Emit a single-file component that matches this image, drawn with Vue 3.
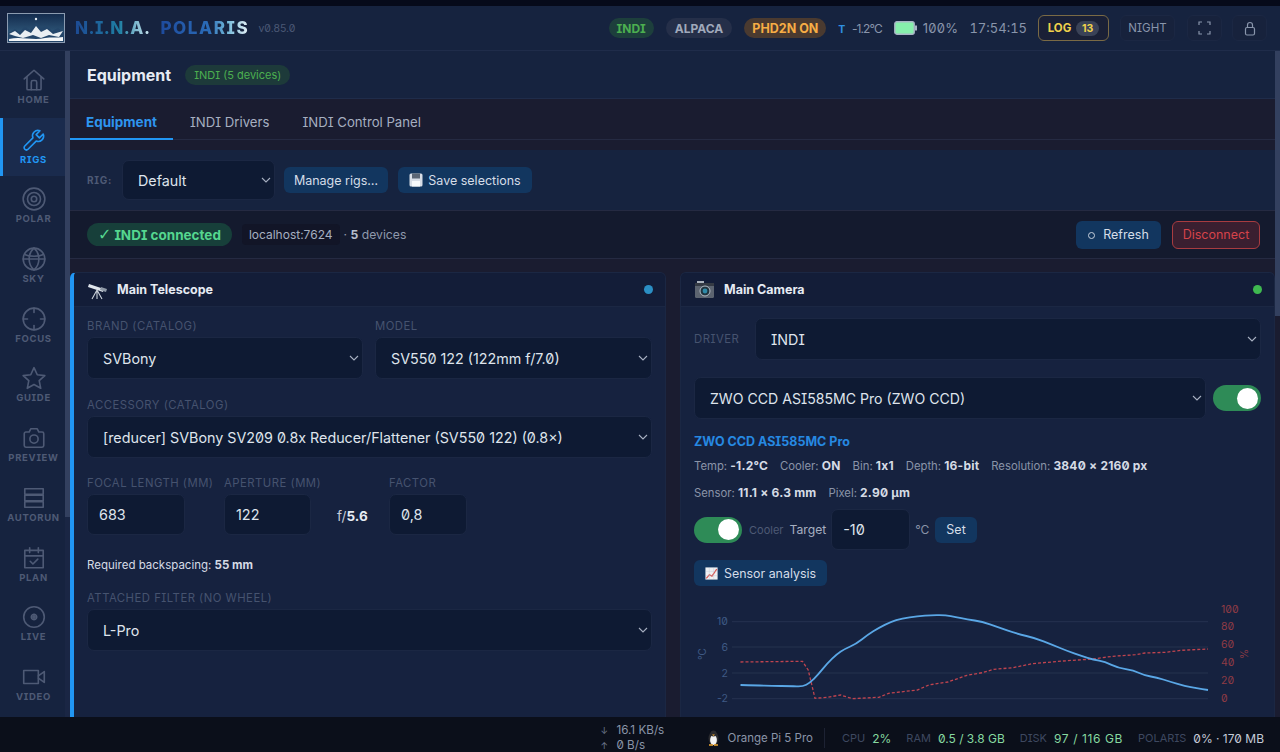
<template>
  <div class="app">
    <div class="top-strip"></div>

    <!-- Header -->
    <header class="header">
      <svg class="logo" viewBox="0 0 58 30" width="58" height="30">
        <defs>
          <linearGradient id="sky" x1="0" y1="0" x2="0" y2="1">
            <stop offset="0" stop-color="#132b4d" />
            <stop offset="1" stop-color="#3b6a8c" />
          </linearGradient>
        </defs>
        <rect x="0.5" y="0.5" width="57" height="29" fill="url(#sky)" stroke="#8b9bb0" />
        <circle cx="29" cy="6" r="1.2" fill="#e8eef5" />
        <path d="M1 29 V20 L8 16 L12 19 L18 14 L23 17 L29 10 L34 15 L40 13 L45 18 L51 15 L57 19 V29 Z" fill="#24466a" />
        <path d="M2 21 L8 18 L13 22 L18 17 L24 20 L29 13 L34 19 L40 16 L46 21 L56 18 L52 24 L42 22 L34 25 L26 22 L16 25 L8 23 Z" fill="#e9eef2" />
        <path d="M2 26 C14 23 26 28 38 25 C44 24 50 25 56 24 V28 H2 Z" fill="#f4f6f8" />
      </svg>
      <div class="brand">
        <span class="brand-a">N.I.N.A.</span>
        <span class="brand-b">POLARIS</span>
      </div>
      <span class="version">v0.85.0</span>

      <div class="status">
        <span class="pill pill-green">INDI</span>
        <span class="pill pill-grey">ALPACA</span>
        <span class="pill pill-orange">PHD2N ON</span>
        <span class="temp"><b>T</b> -1.2°C</span>
        <svg class="battery" width="23" height="14" viewBox="0 0 23 14">
          <rect x="0.8" y="0.8" width="19.4" height="12.4" rx="2" fill="#86efac" stroke="#a9b4c6" stroke-width="1.4" />
          <rect x="21" y="4.5" width="2" height="5" fill="#a9b4c6" />
        </svg>
        <span class="stat">100%</span>
        <span class="stat clock">17:54:15</span>
        <button class="log-btn">LOG <span class="log-count">13</span></button>
        <button class="head-btn night">NIGHT</button>
        <button class="head-btn icon-btn">
          <svg width="13" height="14" viewBox="0 0 13 14" fill="none" stroke="#8995ab" stroke-width="1.2">
            <path d="M1 4 V1 H4 M9 1 H12 V4 M12 10 V13 H9 M4 13 H1 V10" />
          </svg>
        </button>
        <button class="head-btn icon-btn">
          <svg width="14" height="15" viewBox="0 0 14 15" fill="none" stroke="#8995ab" stroke-width="1.2">
            <rect x="2.5" y="6.5" width="9" height="7.5" rx="1.5" />
            <path d="M4.5 6.5 V4 a2.5 2.5 0 0 1 5 0 V6.5" />
          </svg>
        </button>
      </div>
    </header>

    <div class="body">
      <!-- Sidebar -->
      <nav class="sidebar">
        <a v-for="item in navItems" :key="item.label" class="nav-item" :class="{ active: item.active }">
          <svg width="26" height="26" viewBox="0 0 24 24" fill="none" stroke="currentColor" stroke-width="1.5" stroke-linecap="round" stroke-linejoin="round">
            <path v-for="d in item.paths" :key="d" :d="d" />
            <circle v-for="c in item.circles" :key="c[0] + '-' + c[2]" :cx="c[0]" :cy="c[1]" :r="c[2]" />
          </svg>
          <span>{{ item.label }}</span>
        </a>
      </nav>
      <div class="side-scroll"></div>

      <!-- Main -->
      <main class="main">
        <div class="page-head">
          <h1>Equipment</h1>
          <span class="mode-tag">INDI (5 devices)</span>
        </div>

        <div class="tabs">
          <a class="tab active">Equipment</a>
          <a class="tab">INDI Drivers</a>
          <a class="tab">INDI Control Panel</a>
        </div>

        <div class="rig-row">
          <label class="rig-label">RIG:</label>
          <div class="field rig-select">
            <select><option>Default</option></select>
            <svg class="chev" width="10" height="6" viewBox="0 0 10 6"><path d="M1 1 L5 5 L9 1" /></svg>
          </div>
          <button class="btn manage">Manage rigs…</button>
          <button class="btn save">
            <svg width="14" height="14" viewBox="0 0 14 14">
              <rect x="0.5" y="0.5" width="13" height="13" rx="1.5" fill="#d7dde6" />
              <rect x="3" y="0.5" width="8" height="5" fill="#5b6675" />
              <rect x="3" y="8" width="8" height="5.5" fill="#f6f8fa" />
            </svg>
            Save selections
          </button>
        </div>

        <div class="conn-bar">
          <span class="conn-pill"><span class="check">✓</span> INDI connected</span>
          <code class="host">localhost:7624</code>
          <span class="devices">· <b>5</b> devices</span>
          <div class="conn-actions">
            <button class="btn refresh"><span class="ring"></span> Refresh</button>
            <button class="btn disconnect">Disconnect</button>
          </div>
        </div>

        <div class="panels">
          <!-- Telescope -->
          <section class="panel panel-left">
            <div class="panel-head">
              <svg width="21" height="21" viewBox="0 0 21 21">
                <path d="M2 5 L17 10 L16 13 L1 8 Z" fill="#dfe5ec" />
                <path d="M14 8 L20 10 L19 13 L13 11 Z" fill="#8f9aa8" />
                <path d="M10 11 L5 20 M10 11 L10 20 M10 11 L15 20" stroke="#c9d0d9" stroke-width="1.1" fill="none" />
              </svg>
              <h2>Main Telescope</h2>
              <span class="dot dot-blue"></span>
            </div>
            <div class="panel-body">
              <div class="row two">
                <div>
                  <label>Brand (catalog)</label>
                  <div class="field">
                    <select><option>SVBony</option></select>
                    <svg class="chev" width="10" height="6" viewBox="0 0 10 6"><path d="M1 1 L5 5 L9 1" /></svg>
                  </div>
                </div>
                <div>
                  <label>Model</label>
                  <div class="field">
                    <select><option>SV550 122 (122mm f/7.0)</option></select>
                    <svg class="chev" width="10" height="6" viewBox="0 0 10 6"><path d="M1 1 L5 5 L9 1" /></svg>
                  </div>
                </div>
              </div>
              <div class="row">
                <label>Accessory (catalog)</label>
                <div class="field">
                  <select><option>[reducer] SVBony SV209 0.8x Reducer/Flattener (SV550 122) (0.8×)</option></select>
                  <svg class="chev" width="10" height="6" viewBox="0 0 10 6"><path d="M1 1 L5 5 L9 1" /></svg>
                </div>
              </div>
              <div class="row optics">
                <div class="w-focal">
                  <label>Focal length (mm)</label>
                  <input class="num" value="683" />
                </div>
                <div class="w-aperture">
                  <label>Aperture (mm)</label>
                  <input class="num" value="122" />
                </div>
                <span class="ratio">f/<b>5.6</b></span>
                <div class="w-factor">
                  <label>Factor</label>
                  <input class="num" value="0,8" />
                </div>
              </div>
              <p class="backspacing">Required backspacing: <b>55 mm</b></p>
              <div class="row">
                <label>Attached filter (no wheel)</label>
                <div class="field">
                  <select><option>L-Pro</option></select>
                  <svg class="chev" width="10" height="6" viewBox="0 0 10 6"><path d="M1 1 L5 5 L9 1" /></svg>
                </div>
              </div>
            </div>
          </section>

          <!-- Camera -->
          <section class="panel panel-right">
            <div class="panel-head">
              <svg width="21" height="19" viewBox="0 0 21 19">
                <rect x="3" y="1" width="7" height="3" fill="#aab2bc" />
                <rect x="1" y="3" width="19" height="15" rx="1.5" fill="#5c6470" />
                <rect x="1" y="3" width="19" height="3" fill="#343a44" />
                <circle cx="11" cy="11" r="5" fill="#20343f" stroke="#b4bcc6" />
                <circle cx="11" cy="11" r="2.4" fill="#2f8aa8" />
              </svg>
              <h2>Main Camera</h2>
              <span class="dot dot-green"></span>
            </div>
            <div class="panel-body cam-body">
              <div class="driver-row">
                <label>Driver</label>
                <div class="field">
                  <select><option>INDI</option></select>
                  <svg class="chev" width="10" height="6" viewBox="0 0 10 6"><path d="M1 1 L5 5 L9 1" /></svg>
                </div>
              </div>
              <div class="device-row">
                <div class="field">
                  <select><option>ZWO CCD ASI585MC Pro (ZWO CCD)</option></select>
                  <svg class="chev" width="10" height="6" viewBox="0 0 10 6"><path d="M1 1 L5 5 L9 1" /></svg>
                </div>
                <span class="toggle"><i></i></span>
              </div>
              <div class="cam-name">ZWO CCD ASI585MC Pro</div>
              <div class="cam-stats">
                <span>Temp: <b>-1.2°C</b></span>
                <span>Cooler: <b>ON</b></span>
                <span>Bin: <b>1x1</b></span>
                <span>Depth: <b>16-bit</b></span>
                <span>Resolution: <b>3840 × 2160 px</b></span>
              </div>
              <div class="cam-stats second">
                <span>Sensor: <b>11.1 × 6.3 mm</b></span>
                <span>Pixel: <b>2.90 µm</b></span>
              </div>
              <div class="cooler-row">
                <span class="toggle"><i></i></span>
                <span class="cooler-label">Cooler</span>
                <span class="target-label">Target</span>
                <input class="num target" value="-10" />
                <span class="unit">°C</span>
                <button class="btn set">Set</button>
              </div>
              <button class="btn sensor">
                <svg width="15" height="15" viewBox="0 0 15 15">
                  <rect x="0.5" y="0.5" width="14" height="14" fill="#eef1f4" />
                  <path d="M1.5 13 L5 9 L8 10.5 L13.5 2.5" fill="none" stroke="#d9534f" stroke-width="1.4" />
                  <path d="M5 1 V14 M10 1 V14 M1 5 H14 M1 10 H14" stroke="#b9c2cc" stroke-width="0.4" />
                </svg>
                Sensor analysis
              </button>
              <svg class="chart" width="570" height="117" viewBox="0 0 570 117">
                <line v-for="y in grid" :key="y" x1="42" x2="518" :y1="y" :y2="y" class="grid-line" />
                <text v-for="t in leftTicks" :key="t.v" x="38" :y="t.y + 3.5" class="tick-left">{{ t.v }}</text>
                <text v-for="t in rightTicks" :key="t.v" x="531" :y="t.y + 3.5" class="tick-right">{{ t.v }}</text>
                <text x="0" y="0" class="axis-left" transform="translate(16 54) rotate(-90)">°C</text>
                <text x="0" y="0" class="axis-right" transform="translate(558 54) rotate(-90)">%</text>
                <polyline :points="humidityLine" class="line-hum" />
                <path :d="tempLine" class="line-temp" />
              </svg>
            </div>
          </section>
        </div>
        <div class="main-scroll"></div>
      </main>
    </div>

    <!-- Footer -->
    <footer class="footer">
      <div class="net">
        <span><i>↓</i> 16.1 KB/s</span>
        <span><i>↑</i> 0 B/s</span>
      </div>
      <svg class="penguin" width="13" height="16" viewBox="0 0 13 16">
        <ellipse cx="6.5" cy="8.5" rx="5" ry="7" fill="#2a2a2e" />
        <ellipse cx="6.5" cy="10" rx="3.4" ry="5" fill="#f2f2f2" />
        <circle cx="6.5" cy="3.5" r="3" fill="#2a2a2e" />
        <path d="M5 4.5 H8 L6.5 6 Z" fill="#f0a830" />
        <path d="M2 15 H6 M7 15 H11" stroke="#f0a830" stroke-width="1.4" />
      </svg>
      <span class="host-name">Orange Pi 5 Pro</span>
      <span class="foot-div"></span>
      <span class="foot-key">CPU</span><span class="foot-val">2%</span>
      <span class="foot-key">RAM</span><span class="foot-val">0.5 / 3.8 GB</span>
      <span class="foot-key">DISK</span><span class="foot-val disk">97 / 116 GB</span>
      <span class="foot-key">POLARIS</span><span class="foot-val light">0% · 170 MB</span>
    </footer>
  </div>
</template>

<script setup>
const navItems = [
  { label: 'Home', paths: ['M3 11 L12 3 L21 11', 'M5.5 9 V20 a1 1 0 0 0 1 1 H17.5 a1 1 0 0 0 1 -1 V9', 'M9.5 21 V14 a1.5 1.5 0 0 1 1.5 -1.5 H13 a1.5 1.5 0 0 1 1.5 1.5 V21'] },
  { label: 'Rigs', active: true, paths: ['M20.5 6.5 L17 10 L14 7 L17.5 3.5 A5 5 0 0 0 11 10 L3.5 17.5 a2.1 2.1 0 0 0 3 3 L14 13 A5 5 0 0 0 20.5 6.5 Z'] },
  { label: 'Polar', paths: [], circles: [[12, 12, 10], [12, 12, 6], [12, 12, 2.5]] },
  { label: 'Sky', paths: ['M2 12 H22', 'M12 2 C6 7 6 17 12 22', 'M12 2 C18 7 18 17 12 22', 'M4 8 C8 10 16 10 20 8'], circles: [[12, 12, 10]] },
  { label: 'Focus', paths: ['M12 2 V6', 'M12 18 V22', 'M2 12 H6', 'M18 12 H22'], circles: [[12, 12, 10]] },
  { label: 'Guide', paths: ['M12 2.5 L15 9 L22 9.8 L16.8 14.5 L18.2 21.5 L12 18 L5.8 21.5 L7.2 14.5 L2 9.8 L9 9 Z'] },
  { label: 'Preview', paths: ['M3 8 a1.5 1.5 0 0 1 1.5 -1.5 H7.5 L9 3.5 H15 L16.5 6.5 H19.5 A1.5 1.5 0 0 1 21 8 V19 a1.5 1.5 0 0 1 -1.5 1.5 H4.5 A1.5 1.5 0 0 1 3 19 Z'], circles: [[12, 13, 3.8]] },
  { label: 'Autorun', paths: ['M3.5 3.5 H20.5 V8.5 H3.5 Z', 'M3.5 9.5 H20.5 V14.5 H3.5 Z', 'M3.5 15.5 H20.5 V20.5 H3.5 Z'] },
  { label: 'Plan', paths: ['M3.5 5 H20.5 V21 H3.5 Z', 'M3.5 10 H20.5', 'M8 2.5 V7', 'M16 2.5 V7', 'M8.5 15 L11 17.5 L15.5 13'] },
  { label: 'Live', paths: ['M12 11 a1 1 0 1 0 0.01 0', 'M12 9.5 a2.5 2.5 0 1 0 0.01 0'], circles: [[12, 12, 9.5]] },
  { label: 'Video', paths: ['M2.5 6 H16 V18 H2.5 Z', 'M16 11 L21.5 7 V17 L16 13'] }
]

const grid = [21.7, 47, 73, 98.7]
const leftTicks = [
  { v: 10, y: 21.7 },
  { v: 6, y: 47 },
  { v: 2, y: 73 },
  { v: -2, y: 98.7 }
]
const rightTicks = [
  { v: 100, y: 9 },
  { v: 80, y: 26.7 },
  { v: 60, y: 44.7 },
  { v: 40, y: 62.3 },
  { v: 20, y: 80.3 },
  { v: 0, y: 98.3 }
]

const tempSamples = [
  [50.5, 85], [66.5, 85.3], [81.8, 86], [101, 86], [112.5, 86.7], [120, 82.7], [127.8, 75],
  [137.3, 63.3], [147, 54], [154.6, 49], [166, 44], [177.5, 35], [189, 27.7], [200.5, 22],
  [212, 18.3], [227.3, 16.3], [242.6, 15], [256, 15.3], [265.5, 17], [277, 19.3], [292.3, 21.7],
  [307.6, 27], [326.8, 33.7], [346, 38.3], [361.2, 44.3], [376.5, 50.7], [391.8, 56], [403.3, 59.7],
  [414.8, 61.7], [428.2, 68], [443.5, 70.3], [455, 75.7], [466.5, 77.3], [479.9, 81.7], [495.2, 86],
  [506.6, 88.3], [518, 90]
]
const humiditySamples = [
  [50.5, 62], [112.5, 61.3], [118.2, 70], [125, 98.3], [137.3, 97.3], [150.7, 95], [162.2, 98.7],
  [189, 97.3], [198.6, 93.3], [227.3, 90], [238.7, 85], [257.9, 82], [277, 75.3], [292.3, 72.7],
  [303.8, 69.3], [322.9, 67.7], [342, 63.7], [372.7, 61], [403.3, 59], [422.4, 56.3], [445.4, 54.7],
  [455, 53], [476, 52.3], [491.3, 50.3], [518, 49]
]

// rounded line through the samples, curving at each point towards the next midpoint
const smooth = (pts) => {
  let d = `M${pts[0][0]} ${pts[0][1]}`
  for (let i = 1; i < pts.length - 1; i++) {
    const mx = (pts[i][0] + pts[i + 1][0]) / 2
    const my = (pts[i][1] + pts[i + 1][1]) / 2
    d += ` Q${pts[i][0]} ${pts[i][1]} ${mx} ${my}`
  }
  const last = pts[pts.length - 1]
  return `${d} L${last[0]} ${last[1]}`
}

const tempLine = smooth(tempSamples)
const humidityLine = humiditySamples.map(p => p.join(',')).join(' ')
</script>

<style>
html, body {
  margin: 0;
  background: #0b0f1a;
}
</style>

<style scoped>
* {
  box-sizing: border-box;
}

.app {
  width: 1280px;
  height: 752px;
  display: flex;
  flex-direction: column;
  overflow: hidden;
  background: #1a1c30;
  color: #dde3ee;
  font-family: Inter, "Noto Sans", sans-serif;
  font-feature-settings: "zero", "cv08";
  font-size: 13px;
}

button, input, select {
  font-family: inherit;
  font-feature-settings: inherit;
}

.top-strip {
  height: 6px;
  background: #060a1a;
}

/* Header */
.header {
  height: 45px;
  display: flex;
  align-items: center;
  padding: 0 13px 0 7px;
  background: #16233f;
  border-bottom: 1px solid #1f2c4a;
}

.logo {
  flex: none;
}

.brand {
  margin-left: 10px;
  display: flex;
  gap: 10px;
  font-size: 17px;
  font-weight: 800;
  letter-spacing: 1.6px;
}

.brand-a {
  letter-spacing: 0.5px;
  background: linear-gradient(90deg, #1d4a94, #1f7fa3 60%, #cfe8f2);
  -webkit-background-clip: text;
  background-clip: text;
  color: transparent;
}

.brand-b {
  background: linear-gradient(90deg, #1d4a9c, #2b6cb8 55%, #6fb6d8 75%, #e8f2f6);
  -webkit-background-clip: text;
  background-clip: text;
  color: transparent;
}

.version {
  margin-left: 9px;
  font-size: 10.5px;
  color: #4b5875;
}

.status {
  margin-left: auto;
  display: flex;
  align-items: center;
}

.pill {
  height: 20px;
  display: flex;
  align-items: center;
  padding: 0 9px;
  border-radius: 10px;
  font-size: 12px;
  font-weight: 700;
  margin-right: 12px;
}

.pill-green {
  background: #1d3f3c;
  color: #4caf50;
  padding: 0 8px;
}

.pill-grey {
  background: #252f49;
  color: #a0a9bb;
}

.pill-orange {
  background: #4a3a30;
  color: #f6ad45;
  padding: 0 8px;
  font-size: 12.5px;
}

.temp {
  font-size: 12px;
  color: #8995ab;
  margin-right: 12px;
  letter-spacing: -0.9px;
}

.temp b {
  color: #2f8fe0;
  font-size: 10.5px;
  margin-right: 5px;
}

.battery {
  margin-right: 6px;
}

.stat {
  font-size: 13px;
  color: #8995ab;
  margin-right: 11px;
  letter-spacing: 0.3px;
}

.clock {
  margin-right: 11px;
  letter-spacing: 0;
  font-feature-settings: "zero", "cv08", "tnum";
}

.log-btn {
  width: 71px;
  height: 26px;
  background: #1a2036;
  border: 1px solid #7a6a45;
  border-radius: 6px;
  color: #f0d24c;
  font-size: 11.5px;
  font-weight: 700;
  margin-right: 11px;
  padding: 0;
}

.log-count {
  display: inline-block;
  background: #3a4257;
  border-radius: 9px;
  padding: 1px 6px;
  font-size: 10.5px;
  margin-left: 2px;
}

.head-btn {
  height: 26px;
  background: #17223c;
  border: 1px solid #1b2743;
  border-radius: 6px;
  color: #8995ab;
  font-size: 11.5px;
  display: flex;
  align-items: center;
  justify-content: center;
  padding: 0;
}

.night {
  width: 55px;
  margin-right: 12px;
}

.icon-btn {
  width: 35px;
  margin-right: 10px;
}

.icon-btn:last-child {
  margin-right: 0;
}

/* Sidebar */
.body {
  flex: 1;
  display: flex;
  min-height: 0;
}

.sidebar {
  width: 65px;
  flex: none;
  padding-top: 7px;
  background: #16233f;
  overflow: hidden;
}

.nav-item {
  height: 58px;
  margin-bottom: 1.7px;
  padding: 9px 0 0 2px;
  display: flex;
  flex-direction: column;
  align-items: center;
  color: #4e5a75;
  font-size: 9.5px;
  line-height: 12px;
  font-weight: 700;
  letter-spacing: 0.7px;
  text-transform: uppercase;
}

.nav-item span {
  margin-top: 1px;
}

.nav-item.active {
  color: #2196f3;
  background: #1a2b4d;
  box-shadow: inset 3px 0 0 #2196f3;
}

.side-scroll {
  width: 5px;
  flex: none;
  background: linear-gradient(#33405f 0, #33405f 70%, #1a2644 70%);
}

/* Main */
.main {
  flex: 1;
  min-width: 0;
  display: flex;
  flex-direction: column;
  position: relative;
}

.page-head {
  height: 48px;
  flex: none;
  display: flex;
  align-items: center;
  gap: 14px;
  padding: 0 17px 0;
  background: #16233f;
  border-bottom: 1px solid #1f2c4a;
}

.page-head h1 {
  margin: 0;
  font-size: 16px;
  font-weight: 700;
  color: #e6ebf3;
}

.mode-tag {
  height: 20px;
  display: flex;
  align-items: center;
  padding: 0 9px;
  border-radius: 10px;
  background: #1d3a3a;
  color: #4caf50;
  font-size: 11px;
}

.tabs {
  height: 41px;
  flex: none;
  display: flex;
  gap: 1px;
  background: #1a1c30;
  border-bottom: 1px solid #252a42;
}

.tab {
  height: 41px;
  padding: 4px 16px 0;
  display: flex;
  align-items: center;
  color: #a6afc0;
  font-size: 13.2px;
}

.tab.active {
  color: #2e95ee;
  font-weight: 700;
  font-size: 13.5px;
  box-shadow: inset 0 -2px 0 #2196f3;
}

.rig-row {
  height: 61px;
  flex: none;
  margin-top: 10px;
  display: flex;
  align-items: center;
  padding: 0 17px;
  background: #16233f;
  border-bottom: 1px solid #252a42;
}

.rig-label {
  width: 35px;
  font-size: 10px;
  font-weight: 700;
  letter-spacing: 0.7px;
  color: #4e5a75;
}

.field {
  position: relative;
}

.field select {
  width: 100%;
  height: 42px;
  appearance: none;
  background: #0e1a33;
  border: 1px solid #1b2743;
  border-radius: 7px;
  color: #dfe4ec;
  font-size: 14.3px;
  padding: 0 30px 0 15px;
  outline: none;
}

.chev {
  position: absolute;
  right: 4px;
  top: 50%;
  margin-top: -3px;
  fill: none;
  stroke: #a6afc0;
  stroke-width: 1.1;
}

.rig-select {
  width: 153px;
  margin-right: 9px;
}

.rig-select select {
  height: 40px;
}

.btn {
  height: 26px;
  display: inline-flex;
  align-items: center;
  gap: 5px;
  padding: 0 11px;
  background: #12365f;
  border: none;
  border-radius: 6px;
  color: #d5dde8;
  font-size: 12.5px;
  white-space: nowrap;
}

.manage {
  width: 104px;
  justify-content: center;
  padding: 0;
  margin-right: 10px;
}

.save {
  width: 134px;
  justify-content: center;
  padding: 0;
}

.conn-bar {
  height: 48px;
  flex: none;
  display: flex;
  align-items: center;
  padding: 0 20px 0 17px;
  background: #141a2e;
  border-bottom: 1px solid #252a42;
}

.conn-pill {
  height: 23px;
  display: flex;
  align-items: center;
  gap: 3px;
  padding: 0 11px;
  border-radius: 12px;
  background: #173f3a;
  color: #55d68f;
  font-size: 13.5px;
  font-weight: 700;
}

.check {
  font-family: "DejaVu Sans", sans-serif;
  font-size: 16px;
  font-weight: 700;
}

.host {
  margin-left: 10px;
  padding: 3px 7px;
  background: #121527;
  border-radius: 4px;
  color: #a6afc0;
  font-family: inherit;
  font-size: 12px;
}

.devices {
  margin-left: 4px;
  color: #8f99ac;
  font-size: 12.2px;
}

.devices b {
  color: #b7bfcd;
}

.conn-actions {
  margin-left: auto;
  display: flex;
  gap: 11px;
}

.refresh {
  width: 85px;
  height: 28px;
  justify-content: center;
  gap: 8px;
  padding: 0;
}

.ring {
  width: 7px;
  height: 7px;
  margin-top: 2px;
  border: 1px solid #c6d0dc;
  border-radius: 50%;
}

.disconnect {
  width: 88px;
  height: 28px;
  justify-content: center;
  padding: 0;
  background: #3a1f30;
  border: 1px solid #a83c40;
  color: #d6434a;
}

/* Panels */
.panels {
  flex: 1;
  min-height: 0;
  margin-top: 13px;
  display: flex;
  gap: 14px;
}

.panel {
  background: #16223f;
  overflow: hidden;
  border-radius: 6px 6px 0 0;
  border: 1px solid #1b2743;
  border-bottom: none;
}

.panel-left {
  width: 596px;
  border-left: 4px solid #2196f3;
}

.panel-right {
  width: 595px;
}

.panel-head {
  height: 34px;
  display: flex;
  align-items: center;
  gap: 9px;
  padding: 0 13px;
  background: #131d38;
  border-bottom: 1px solid #1b2743;
}

.panel-head h2 {
  margin: 0;
  font-size: 12.5px;
  font-weight: 700;
  color: #e6ebf3;
}

.dot {
  width: 9px;
  height: 9px;
  margin-left: auto;
  margin-right: -1px;
  border-radius: 50%;
}

.dot-blue {
  background: #2b8fc4;
}

.dot-green {
  background: #3fb950;
}

.panel-body {
  padding: 12px 13px;
}

.panel-body label {
  display: block;
  margin-bottom: 4px;
  height: 14px;
  line-height: 14px;
  color: #46536f;
  font-size: 11.3px;
  letter-spacing: 0.5px;
  text-transform: uppercase;
  white-space: nowrap;
}

.row {
  margin-bottom: 19px;
}

.two {
  display: grid;
  grid-template-columns: 276px 277px;
  gap: 12px;
}

.optics {
  display: flex;
  align-items: flex-end;
  margin-top: -1px;
  margin-bottom: 0;
}

.num {
  height: 41px;
  width: 100%;
  background: #0e1a33;
  border: 1px solid #1b2743;
  border-radius: 7px;
  color: #dfe4ec;
  font-size: 14.4px;
  padding: 0 11px;
  outline: none;
}

.w-focal {
  width: 98px;
  margin-right: 39px;
}

.w-aperture {
  width: 87px;
  margin-right: 26px;
}

.ratio {
  width: 52px;
  font-size: 13.5px;
  color: #c6cdd9;
  padding-bottom: 11px;
}

.ratio b {
  color: #e6ebf3;
}

.w-factor {
  width: 78px;
}

.backspacing {
  margin: 23px 0 19px;
  height: 14px;
  line-height: 14px;
  font-size: 11.5px;
  color: #d5dbe5;
}

/* Camera */
.cam-body {
  padding-top: 11px;
}

.driver-row {
  display: flex;
  align-items: center;
  margin-bottom: 17px;
}

.driver-row label {
  width: 61px;
  margin: 0;
  flex: none;
}

.driver-row .field {
  flex: 1;
}

.device-row {
  display: flex;
  align-items: center;
  gap: 7px;
}

.device-row .field {
  flex: 1;
}

.device-row select {
  font-size: 14.1px;
}

.toggle {
  width: 48px;
  height: 26px;
  flex: none;
  display: flex;
  align-items: center;
  justify-content: flex-end;
  padding-right: 3px;
  background: #2e8b57;
  border-radius: 13px;
}

.toggle i {
  width: 21px;
  height: 21px;
  border-radius: 50%;
  background: #fff;
}

.cam-name {
  margin-top: 15px;
  font-size: 12.5px;
  font-weight: 700;
  color: #2689e2;
}

.cam-stats {
  margin-top: 9px;
  display: flex;
  gap: 12px;
  font-size: 11.3px;
  color: #8a94a8;
}

.cam-stats.second {
  margin-top: 12px;
}

.cam-stats b {
  color: #d5dbe5;
  font-size: 12px;
  letter-spacing: 0.2px;
}

.cooler-row {
  margin-top: 9px;
  display: flex;
  align-items: center;
}

.cooler-label {
  margin-left: 7px;
  font-size: 11px;
  color: #4e5a75;
}

.target-label {
  margin-left: 6px;
  font-size: 12.2px;
  color: #a6afc0;
}

.target {
  width: 79px;
  height: 41px;
  margin-left: 5px;
}

.unit {
  margin-left: 5px;
  color: #8a94a8;
  font-size: 12px;
}

.set {
  margin-left: 6px;
}

.sensor {
  margin-top: 10px;
  width: 133px;
  padding: 0 11px;
  gap: 6px;
  display: flex;
  font-size: 12.4px;
}

.chart {
  display: block;
  margin: 14px 0 0 -4px;
}

.grid-line {
  stroke: #25324f;
  stroke-width: 1;
}

.tick-left {
  font-size: 10.5px;
  fill: #3f5a85;
  text-anchor: end;
}

.tick-right {
  font-size: 10.5px;
  fill: #8f3b45;
}

.axis-left {
  font-size: 10px;
  fill: #3f5a85;
  text-anchor: middle;
}

.axis-right {
  font-size: 10px;
  fill: #8f3b45;
  text-anchor: middle;
}

.line-temp {
  fill: none;
  stroke: #5aa7e6;
  stroke-width: 1.8;
  stroke-linejoin: round;
}

.line-hum {
  fill: none;
  stroke: #c0444f;
  stroke-width: 1.3;
  stroke-dasharray: 3 2;
}

.main-scroll {
  position: absolute;
  right: 0;
  top: 0;
  width: 5px;
  height: 265px;
  background: #33405f;
}

/* Footer */
.footer {
  height: 35px;
  flex: none;
  display: flex;
  align-items: center;
  justify-content: flex-end;
  padding: 7px 16px 0 0;
  background: #0b0f1a;
  font-size: 11.5px;
  color: #8a94a8;
}

.net {
  display: flex;
  flex-direction: column;
  line-height: 14px;
  font-size: 11.7px;
  margin-right: 42px;
  width: 64px;
  white-space: nowrap;
}

.net i {
  font-style: normal;
  font-size: 9px;
  color: #6f7a90;
  margin-right: 5px;
}

.penguin {
  margin-right: 8px;
}

.foot-div {
  width: 1px;
  height: 20px;
  background: #1d2233;
  margin: 0 11px;
}

.foot-key {
  margin-left: 15px;
  font-size: 11px;
  color: #3e4860;
}

.foot-div + .foot-key {
  margin-left: 6px;
}

.foot-val {
  margin-left: 7px;
  color: #86d9a0;
  font-size: 12px;
}

.foot-val.disk {
  letter-spacing: 0.6px;
}

.foot-val.light {
  color: #c5cbd8;
}
</style>
